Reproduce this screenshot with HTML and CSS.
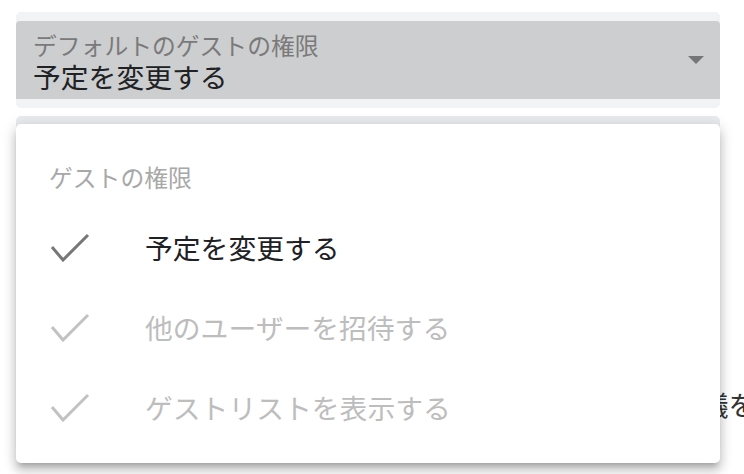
FILE: index.html
```html
<!DOCTYPE html>
<html lang="ja">
<head>
    <meta charset="UTF-8">
    <meta name="viewport" content="width=device-width, initial-scale=1.0">
    <title>ゲストの権限</title>
    <link rel="stylesheet" href="styles.css">
</head>
<body>
    <div class="page">
        <div class="field">
            <div class="field-inner">
                <div class="field-text">
                    <div class="field-label">デフォルトのゲストの権限</div>
                    <div class="field-value">予定を変更する</div>
                </div>
                <span class="arrow"></span>
            </div>
        </div>
        <div class="field next"></div>
        <div class="behind">会議を</div>

        <div class="menu">
            <div class="menu-header">ゲストの権限</div>
            <div class="menu-item">
                <svg class="check" viewBox="0 0 40 30"><polyline points="2,15 13,28 38,3"/></svg>
                <span>予定を変更する</span>
            </div>
            <div class="menu-item disabled">
                <svg class="check" viewBox="0 0 40 30"><polyline points="2,15 13,28 38,3"/></svg>
                <span>他のユーザーを招待する</span>
            </div>
            <div class="menu-item disabled">
                <svg class="check" viewBox="0 0 40 30"><polyline points="2,15 13,28 38,3"/></svg>
                <span>ゲストリストを表示する</span>
            </div>
        </div>
    </div>
</body>
</html>
```

FILE: styles.css
```css
body {
    margin: 0;
    background-color: white;
    font-family: "Noto Sans CJK JP", "Noto Sans", sans-serif;
    overflow: hidden;
}
.page {
    position: relative;
    width: 744px;
    height: 474px;
    padding: 12px 24px 0 16px;
    box-sizing: border-box;
}
.field {
    background-color: #f1f3f4;
    border-radius: 5px;
    padding: 9px 0;
}
.field-inner {
    display: flex;
    align-items: center;
    height: 78px;
    background-color: #cdcecf;
    border-radius: 4px 4px 0 0;
    padding: 0 16px 0 17px;
}
.field-text {
    flex: 1;
    padding-top: 4px;
}
.field-label {
    font-size: 23.8px;
    line-height: 28px;
    color: #7a7a7a;
}
.field-value {
    font-size: 27.8px;
    line-height: 34px;
    color: #202124;
}
.arrow {
    width: 0;
    height: 0;
    border-left: 8px solid transparent;
    border-right: 8px solid transparent;
    border-top: 8px solid #767676;
}
.field.next {
    margin-top: 8px;
    height: 80px;
    padding: 0;
    background-color: #e8eaed;
}
.behind {
    margin-top: 188px;
    padding-left: 657px;
    font-size: 27.8px;
    white-space: nowrap;
    color: #333;
}
.menu {
    position: absolute;
    left: 16px;
    top: 124px;
    width: 704px;
    height: 339px;
    box-sizing: border-box;
    background-color: white;
    border-radius: 5px;
    box-shadow: 0 8px 10px 1px rgba(0,0,0,0.14), 0 3px 14px 2px rgba(0,0,0,0.12), 0 5px 5px -3px rgba(0,0,0,0.2);
    padding: 36px 0 16px;
}
.menu-header {
    padding-left: 33px;
    font-size: 23.8px;
    line-height: 34px;
    color: #a8a8a8;
    margin-bottom: 13px;
}
.menu-item {
    display: flex;
    align-items: center;
    height: 80px;
    padding-left: 34px;
    font-size: 27.8px;
    color: #202124;
}
.check {
    width: 40px;
    height: 30px;
    margin-right: 55px;
    fill: none;
    stroke: #777;
    stroke-width: 3;
}
.menu-item.disabled {
    color: #bdbdbd;
}
.menu-item.disabled .check {
    stroke: #c2c2c2;
}
```
